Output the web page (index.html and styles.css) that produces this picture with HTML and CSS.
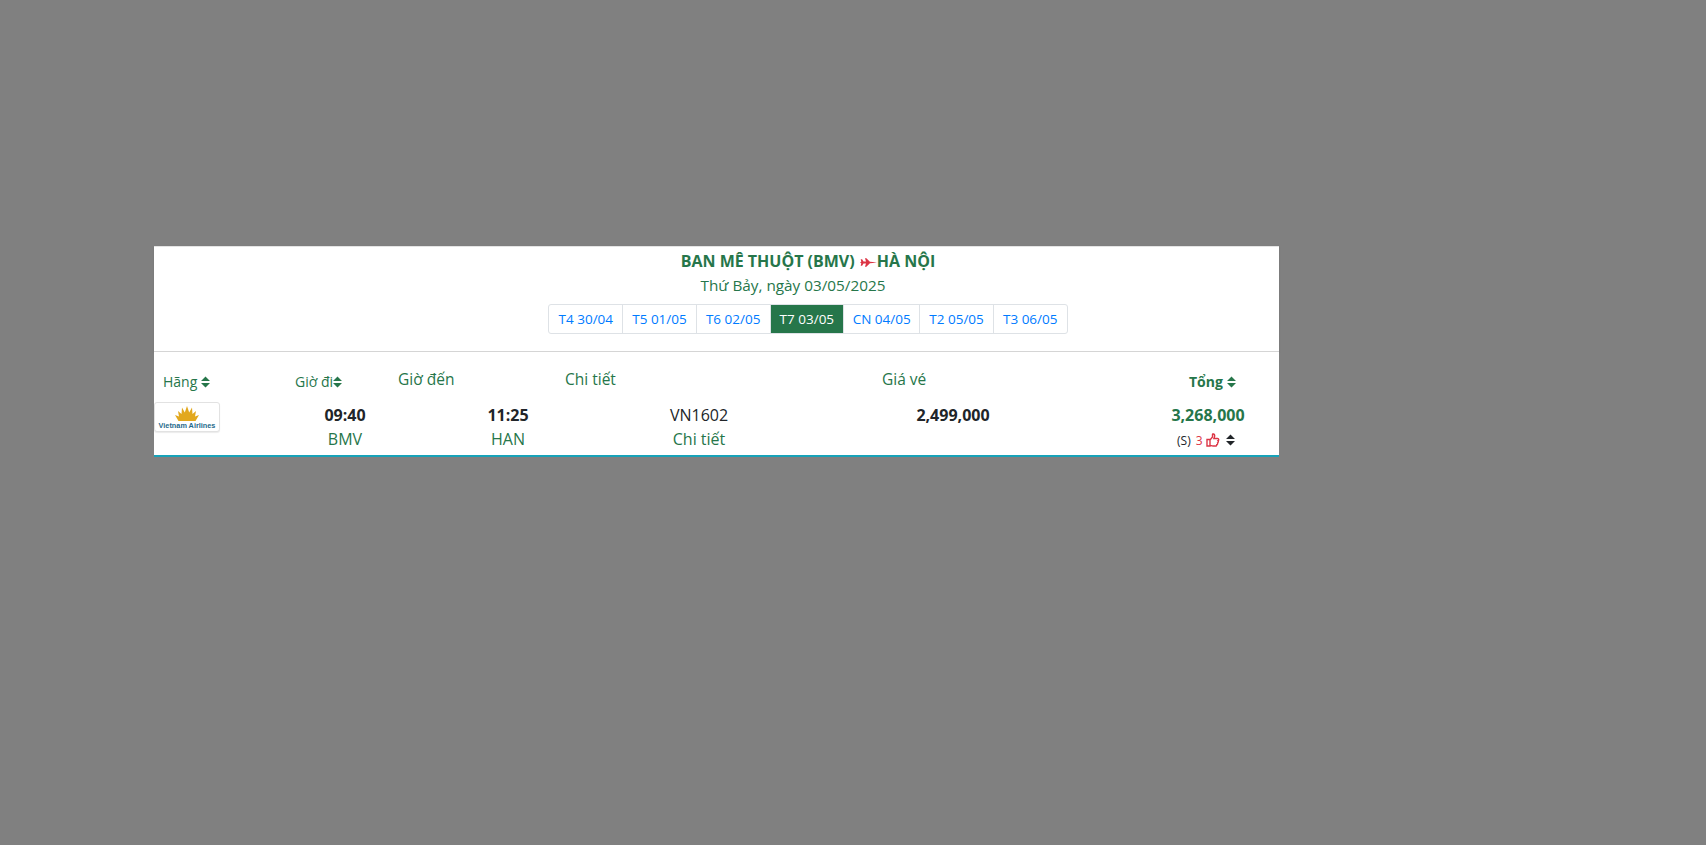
FILE: index.html
```html
<!DOCTYPE html>
<html lang="vi">
<head>
    <meta charset="utf-8" />
    <title>Ban Mê Thuột - Hà Nội</title>
    <link rel="stylesheet" href="styles.css">
</head>
<body>
<div class="panel">
    <div class="search-head">
        <div class="route">BAN MÊ THUỘT (BMV)
            <svg class="jet" viewBox="0 0 24 12"><path d="M1 1.500h2L5 4.500h3.500L7 0h2l5 4.800 4 .5L24 6l-6 .7-4 .5L9 12H7l1.500-4.500H5L3 10.500H1l.8-3.500L0 6l1.800-1z"/></svg><span>HÀ NỘI</span></div>
        <div class="date">Thứ Bảy, ngày 03/05/2025</div>
        <ul class="pager">
            <li><a href="#">T4 30/04</a></li>
            <li><a href="#">T5 01/05</a></li>
            <li><a href="#">T6 02/05</a></li>
            <li class="active"><a href="#">T7 03/05</a></li>
            <li class="wide"><a href="#">CN 04/05</a></li>
            <li><a href="#">T2 05/05</a></li>
            <li><a href="#">T3 06/05</a></li>
        </ul>
    </div>

    <div class="list-head">
        <div class="sm">Hãng <svg class="sort" viewBox="0 0 10 12"><path d="M5 0l5 5H0zM5 12L0 7h10z"/></svg></div>
        <div class="sm">Giờ đi<svg class="sort" viewBox="0 0 10 12"><path d="M5 0l5 5H0zM5 12L0 7h10z"/></svg></div>
        <div>Giờ đến</div>
        <div>Chi tiết</div>
        <div>Giá vé</div>
        <div class="sm total-head">Tổng <svg class="sort" viewBox="0 0 10 12"><path d="M5 0l5 5H0zM5 12L0 7h10z"/></svg></div>
    </div>

    <div class="flight">
        <div class="logo-cell">
            <div class="logo">
                <svg viewBox="0 0 24 15"><path d="M12 0l2.200 6.500L17 1.500l.5 6.500L21 5l-1 5.500 4-1.500-3.500 6h-17L0 9l4 1.500L3 5l3.500 3L7 1.500l2.800 5z"/></svg>
                <span>Vietnam Airlines</span>
            </div>
        </div>
        <div class="cell"><b>09:40</b><span>BMV</span></div>
        <div class="cell"><b>11:25</b><span>HAN</span></div>
        <div class="cell"><em>VN1602</em><span>Chi tiết</span></div>
        <div class="cell"><b>2,499,000</b></div>
        <div class="cell total">
            <b>3,268,000</b>
            <small>(S) <i>3</i>
                <svg class="thumb" viewBox="0 0 14 14"><path d="M1 6.500h3v6.500H1zM4 7l2.500-3V1.500c0-1 2.200-.8 2.200 1.200 0 1-.5 2-.8 2.800h3.600c1.600 0 1.600 2 .5 2.300.6.700.4 1.700-.4 2 .3.900-.1 1.600-.8 1.800.1 1-.5 1.400-1.300 1.400H7c-1.200 0-2-.6-3-.8"/></svg>
                <svg class="sort dark" viewBox="0 0 10 12"><path d="M5 0l5 5H0zM5 12L0 7h10z"/></svg>
            </small>
        </div>
    </div>
</div>
</body>
</html>
```

FILE: styles.css
```css
body {margin: 0; min-height: 845px; background-color: #808080; font-family: "Open Sans", "Noto Sans", sans-serif; font-size: 16px; color: #212529;}

.panel {width: 1125px; margin-left: 154px; padding-top: 246px;}

.search-head {height: 106px; padding-left: 183px; background: #fff; border-top: 1px solid #e4e4e4; border-bottom: 1px solid #d5d5d5; box-shadow: 0 1px 2px rgba(0,0,0,.1); text-align: center; color: #26764a; box-sizing: border-box;}
.route {font-weight: 700; font-size: 16px; line-height: 24px; margin-top: 2px;}
.jet {width: 17px; height: 9px; margin-left: 1px; fill: #dc3545;}
.date {font-size: 15.300px; line-height: 24px; padding-right: 30px;}
.pager {display: inline-flex; list-style: none; margin: 7px 0 0; padding: 0; border: 1px solid #dee2e6; border-radius: 3px; font-size: 13.500px;}
.pager li {border-left: 1px solid #dee2e6;}
.pager li:first-child {border-left: 0;}
.pager a {display: block; width: 72.700px; line-height: 28px; color: #007bff; text-decoration: none; white-space: nowrap;}
.pager .wide a {width: 75px;}
.pager .active {background: #26764a;}
.pager .active a {color: #fff;}

.list-head {display: grid; grid-template-columns: 132px 103px 167px 317px 307px 90px; height: 48px; padding: 15px 0 0 9px; background: #fff; color: #26764a; line-height: 24px; font-size: 15.500px; box-sizing: border-box;}
.list-head > div {white-space: nowrap;}
.list-head .sm {font-size: 14px; padding-top: 3px;}
.total-head {font-weight: 700;}
.sort {width: 9px; height: 12px; fill: #26764a; vertical-align: -1px;}
.sort.dark {fill: #212529; margin-left: 3px;}

.flight {display: grid; grid-template-columns: 131px 120px 206px 176px 332px 160px; height: 53px; padding-top: 2px; background: #fff; border-bottom: 2px solid #17a2b8;}
.logo {display: flex; flex-direction: column; align-items: center; width: 64px; height: 28px; background: #fff; border: 1px solid #e2e2e2; border-radius: 3px; box-shadow: 0 1px 1px rgba(0,0,0,.08);}
.logo svg {width: 24px; height: 15px; margin-top: 3px; fill: #e2a81e;}
.logo span {font-family: "Liberation Sans", sans-serif; font-size: 7.300px; font-weight: 700; line-height: 9px; color: #1f6a8b; white-space: nowrap;}

.cell {display: flex; flex-direction: column; align-items: center; line-height: 24px; white-space: nowrap;}
.cell b {font-weight: 700; margin-top: 1px;}
.cell em {font-style: normal; margin-top: 1px;}
.cell span {color: #26764a;}
.total {padding-left: 18px;}
.total b {color: #26764a;}
.total small {font-size: 12px; padding: 2px 4px 0 0;}
.total i {font-style: normal; color: #dc3545; margin-left: 2px;}
.thumb {width: 14px; height: 14px; fill: none; stroke: #dc3545; stroke-width: 1.400; vertical-align: -2px;}
```
